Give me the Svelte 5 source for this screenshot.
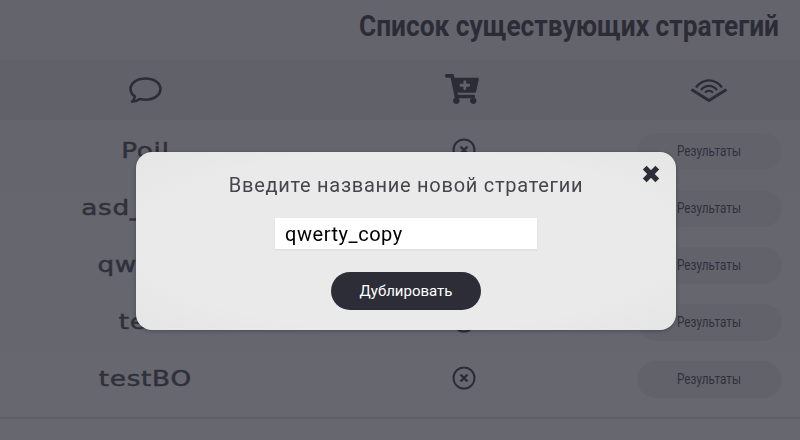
<script>
  const rows = ["Poil", "asd_copy", "qwerty", "test", "testBO"];
  let name = $state("qwerty_copy");
</script>

<div class="page">
  <h1 class="title"><span>Список существующих стратегий</span></h1>

  <div class="head">
    <div class="cell">
      <svg width="36" height="30" viewBox="0 0 36 30" fill="none" stroke="currentColor" stroke-width="2.6" stroke-linejoin="round" stroke-linecap="round">
        <path d="M18.5 3.5c8.5 0 15 4.6 15 10.6s-6.5 10.6-15 10.6c-2 0-3.900-.3-5.600-.7-2 1.600-4.500 2.600-7.900 2.600 1.500-1.300 2.500-3 2.900-5.200C5 19.500 3.500 17 3.500 14.100 3.500 8.100 10 3.500 18.500 3.500z" />
      </svg>
    </div>
    <div class="cell">
      <svg class="cart" width="34" height="30" viewBox="0 0 576 512" fill="currentColor">
        <path d="M504.717 320H211.572l6.545 32h268.418c15.401 0 26.816 14.301 23.403 29.319l-5.517 24.276C523.112 414.668 536 433.828 536 456c0 31.202-25.519 56.444-56.824 55.994-29.823-.429-54.35-24.631-55.155-54.447-.44-16.287 6.085-31.049 16.803-41.548H231.176C241.553 426.165 248 440.326 248 456c0 31.813-26.528 57.431-58.67 55.938-28.54-1.325-51.751-24.385-53.251-52.917-1.158-22.034 10.436-41.455 28.051-51.586L93.883 64H24C10.745 64 0 53.255 0 40V24C0 10.745 10.745 0 24 0h102.529c11.401 0 21.228 8.021 23.513 19.19L159.208 64H551.99c15.401 0 26.816 14.301 23.403 29.319l-47.273 208C525.637 312.246 515.923 320 504.717 320zM408 168h-48v-40c0-8.837-7.163-16-16-16h-16c-8.837 0-16 7.163-16 16v40h-48c-8.837 0-16 7.163-16 16v16c0 8.837 7.163 16 16 16h48v40c0 8.837 7.163 16 16 16h16c8.837 0 16-7.163 16-16v-40h48c8.837 0 16-7.163 16-16v-16c0-8.837-7.163-16-16-16z" />
      </svg>
    </div>
    <div class="cell">
      <svg width="38" height="26" viewBox="0 0 38 26" fill="none" stroke="currentColor" stroke-linecap="butt">
        <path d="M1.500 12.500 19 23.500l17.500-11" stroke-width="3" />
        <path d="M6 10.500C13 1 25 1 32 10.500" stroke-width="2.400" />
        <path d="M11 13C15.500 7.500 22.500 7.500 27 13" stroke-width="2.200" />
        <path d="M15 15.500c2.500-2.500 5.500-2.500 8 0" stroke-width="2" />
      </svg>
    </div>
  </div>

  <div class="rows">
    {#each rows as row}
      <div class="row">
        <div class="cell"><span class="name">{row}</span></div>
        <div class="cell">
          <svg class="state" width="24" height="24" viewBox="0 0 24 24" fill="none" stroke="currentColor">
            <circle cx="12" cy="12" r="10.500" stroke-width="2" />
            <path d="M8.500 8.500l7 7M15.500 8.500l-7 7" stroke-width="2.400" />
          </svg>
        </div>
        <div class="cell"><button class="results"><span>Результаты</span></button></div>
      </div>
    {/each}
  </div>
</div>

<div class="overlay">
  <div class="modal">
    <button class="close" aria-label="Закрыть">
      <svg width="18" height="18" viewBox="0 0 18 18" fill="none" stroke="currentColor" stroke-width="5.400">
        <path d="M2.700 2.700l12.600 12.600M15.300 2.700 2.700 15.300" />
      </svg>
    </button>
    <p class="prompt">Введите название новой стратегии</p>
    <input class="field" bind:value={name} />
    <button class="submit">Дублировать</button>
  </div>
</div>

<style>
  :global(body) {
    margin: 0;
    overflow: hidden;
    font-family: Roboto, "Liberation Sans", sans-serif;
  }

  .page {
    width: 800px;
    height: 440px;
    box-sizing: border-box;
    background: linear-gradient(#f3f3f6, #ffffff);
    color: #2d2d38;
  }

  .title {
    margin: 0;
    height: 60px;
    padding: 8px 21px 0 0;
    box-sizing: border-box;
    text-align: right;
    font-size: 30px;
    line-height: 36px;
    font-weight: 700;
  }

  .title span {
    display: inline-block;
    white-space: nowrap;
    transform: scaleX(0.877);
    transform-origin: right center;
  }

  .head,
  .row {
    display: grid;
    grid-template-columns: 290px 346px 146px;
    align-items: center;
  }

  .head {
    height: 60px;
    background: #e9e9ee;
  }

  .cart {
    margin: -2px 3px 0 0;
  }

  .rows {
    height: 299px;
    padding-top: 2px;
    box-sizing: border-box;
    border-bottom: 2px solid #e2e2e6;
  }

  .row {
    height: 57px;
  }

  .cell {
    display: flex;
    justify-content: center;
    align-items: center;
  }

  .state {
    margin: -1px 0 0 1px;
  }

  .name {
    font-family: "DejaVu Sans", sans-serif;
    font-size: 21px;
    letter-spacing: 0.6px;
    display: inline-block;
    transform: scaleX(1.25);
    color: #3a3a46;
    -webkit-text-stroke: 0.5px #3a3a46;
  }

  .results {
    width: 145px;
    height: 37px;
    margin: 2px 0 0 1px;
    border: none;
    border-radius: 19px;
    background: #eeeef1;
    color: #3a3a46;
    font-family: Roboto, sans-serif;
    font-size: 15px;
    padding: 0 0 2px;
  }

  .results span {
    display: inline-block;
    transform: scaleX(0.78);
  }

  .overlay {
    position: fixed;
    inset: 0;
    display: flex;
    justify-content: center;
    align-items: center;
    box-sizing: border-box;
    padding: 42px 0 0 12px;
    background: rgba(44, 44, 56, 0.72);
  }

  .modal {
    position: relative;
    width: 540px;
    height: 178px;
    box-sizing: border-box;
    padding-top: 21px;
    display: flex;
    flex-direction: column;
    align-items: center;
    border-radius: 16px;
    background: radial-gradient(ellipse at center, #eaeaea 70%, #e5e5e5 100%);
    box-shadow: 0 1px 4px rgba(0, 0, 0, 0.3);
  }

  .close {
    position: absolute;
    top: 13px;
    right: 16px;
    width: 18px;
    height: 18px;
    padding: 0;
    border: none;
    background: none;
    color: #2d2d38;
    line-height: 0;
  }

  .prompt {
    margin: 0;
    font-size: 20px;
    line-height: 24px;
    letter-spacing: 0.72px;
    color: #45454b;
  }

  .field {
    margin-top: 21px;
    width: 262px;
    height: 31px;
    box-sizing: border-box;
    padding: 0 10px;
    border: none;
    outline: none;
    background: #ffffff;
    color: #000000;
    font-family: Roboto, sans-serif;
    font-size: 20px;
    letter-spacing: 0.55px;
    box-shadow: 0 1px 2px rgba(0, 0, 0, 0.08);
  }

  .submit {
    margin-top: 23px;
    width: 150px;
    height: 38px;
    border: none;
    border-radius: 19px;
    background: #2d2d38;
    color: #ffffff;
    font-family: Roboto, sans-serif;
    font-size: 15px;
    font-weight: 400;
    padding: 0;
  }
</style>
